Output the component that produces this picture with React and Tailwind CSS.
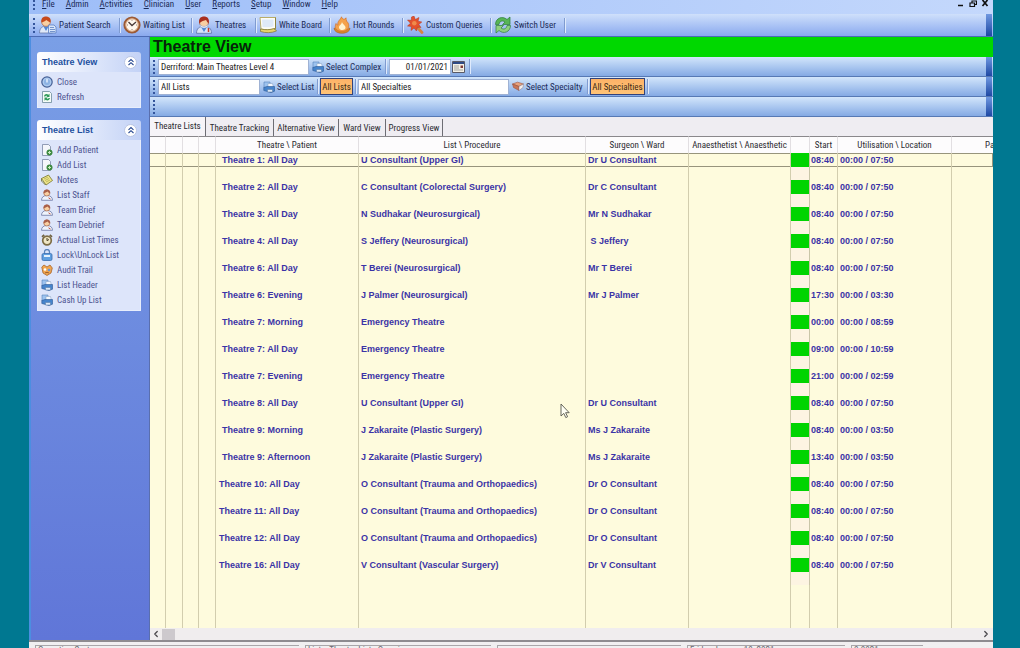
import { useState } from "react";
import { clsx } from "clsx";
import { FiChevronLeft, FiChevronRight } from "react-icons/fi";

const menus = [
  "File",
  "Admin",
  "Activities",
  "Clinician",
  "User",
  "Reports",
  "Setup",
  "Window",
  "Help",
];

const columns = [
  { label: "", width: "w-[16px]" },
  { label: "", width: "w-[17px]" },
  { label: "", width: "w-[16px]" },
  { label: "", width: "w-[17px]" },
  { label: "Theatre \\ Patient", width: "w-[143px]" },
  { label: "List \\ Procedure", width: "w-[227px]" },
  { label: "Surgeon \\ Ward", width: "w-[103px]" },
  { label: "Anaesthetist \\ Anaesthetic", width: "w-[102px]" },
  { label: "", width: "w-[19px]" },
  { label: "Start", width: "w-[28px]" },
  { label: "Utilisation \\ Location", width: "w-[114px]" },
];

const lists = [
  ["Theatre 1: All Day", "U Consultant (Upper GI)", "Dr U Consultant", "08:40", "07:50"],
  ["Theatre 2: All Day", "C Consultant (Colorectal Surgery)", "Dr C Consultant", "08:40", "07:50"],
  ["Theatre 3: All Day", "N Sudhakar (Neurosurgical)", "Mr N Sudhakar", "08:40", "07:50"],
  ["Theatre 4: All Day", "S Jeffery (Neurosurgical)", "\u00a0S Jeffery", "08:40", "07:50"],
  ["Theatre 6: All Day", "T Berei (Neurosurgical)", "Mr T Berei", "08:40", "07:50"],
  ["Theatre 6: Evening", "J Palmer (Neurosurgical)", "Mr J Palmer", "17:30", "03:30"],
  ["Theatre 7: Morning", "Emergency Theatre", "", "00:00", "08:59"],
  ["Theatre 7: All Day", "Emergency Theatre", "", "09:00", "10:59"],
  ["Theatre 7: Evening", "Emergency Theatre", "", "21:00", "02:59"],
  ["Theatre 8: All Day", "U Consultant (Upper GI)", "Dr U Consultant", "08:40", "07:50"],
  ["Theatre 9: Morning", "J Zakaraite (Plastic Surgery)", "Ms J Zakaraite", "08:40", "03:50"],
  ["Theatre 9: Afternoon", "J Zakaraite (Plastic Surgery)", "Ms J Zakaraite", "13:40", "03:50"],
  ["Theatre 10: All Day", "O Consultant (Trauma and Orthopaedics)", "Dr O Consultant", "08:40", "07:50"],
  ["Theatre 11: All Day", "O Consultant (Trauma and Orthopaedics)", "Dr O Consultant", "08:40", "07:50"],
  ["Theatre 12: All Day", "O Consultant (Trauma and Orthopaedics)", "Dr O Consultant", "08:40", "07:50"],
  ["Theatre 16: All Day", "V Consultant (Vascular Surgery)", "Dr V Consultant", "08:40", "07:50"],
];

/* ---------- icons ---------- */

const PatientIcon = () => (
  <svg viewBox="0 0 18 18" className="size-[18px] shrink-0">
    <path d="M.5 17c0-5 3-7 6.500-7s6.500 2 6.500 7z" fill="#dfe8f8" stroke="#6a7cab" strokeWidth=".8" />
    <path d="M4.500 10.500l2.500 4.500 2.500-4.500z" fill="#4f86d6" />
    <circle cx="7" cy="6" r="4.300" fill="#f9cfa2" stroke="#a8552a" strokeWidth=".6" />
    <path d="M2.500 6.500C1.500 2 4.500 .4 7.500 .5 11 .8 12.300 3.500 11.500 6.500 9 5.500 8 4.500 7.500 4 6 5.200 4.500 5.700 2.500 6.500z" fill="#c6491c" />
    <path d="M9.500 9h5.500l2 2v6H9.500z" fill="#d9e6fa" stroke="#5b7fc0" strokeWidth=".8" />
    <path d="M11 11.500h4M11 13.500h5M11 15.500h5" stroke="#5b7fc0" strokeWidth=".8" />
  </svg>
);

const ClockIcon = () => (
  <svg viewBox="0 0 18 18" className="size-[18px] shrink-0">
    <circle cx="9" cy="9" r="7.500" fill="#fff8ee" stroke="#9c5a35" strokeWidth="2.200" />
    <circle cx="9" cy="9" r="6.200" fill="none" stroke="#d9a57c" strokeWidth="1" />
    <path d="M5.500 6L9 9.500 13 6" fill="none" stroke="#4a3a38" strokeWidth="1.300" />
    <path d="M9 3.800v1M9 13v1M4 9h1M13 9h1" stroke="#806050" strokeWidth=".8" />
  </svg>
);

const SurgeonIcon = () => (
  <svg viewBox="0 0 18 18" className="size-[18px] shrink-0">
    <path d="M1.500 17.300c0-5 3-7 7.500-7s7.500 2 7.500 7z" fill="#d7e3f8" stroke="#5c71a8" strokeWidth=".8" />
    <path d="M6 11l3 5 3-5z" fill="#4f86d6" />
    <circle cx="9" cy="6.500" r="4.500" fill="#f9cfa2" stroke="#8b3a24" strokeWidth=".6" />
    <path d="M4.300 7.500C3.200 2.500 6 .6 9 .6s5.800 1.900 4.700 6.900C12 6 11.500 4.500 11 4 9 5 6.500 4.800 4.300 7.500z" fill="#a92f1e" />
    <path d="M5 8.500c2 2.500 6 2.500 8 0l-.6 2.300c-2 1.600-4.800 1.600-6.800 0z" fill="#eef4fd" stroke="#8fa5cc" strokeWidth=".4" />
    <path d="M13.500 12v4" stroke="#c83a2a" strokeWidth="1.500" />
  </svg>
);

const BoardIcon = () => (
  <svg viewBox="0 0 18 18" className="size-[18px] shrink-0">
    <path d="M1 1.500h15.500v11C11 14 6 14 2 13z" fill="#fdfdf6" stroke="#b9ad6a" strokeWidth="1" />
    <path d="M1.500 13c5 1 9 1 14-.5l2 2.500c-5 2-11 2.200-16 .5z" fill="#e8d66a" stroke="#7c7434" strokeWidth=".7" />
    <path d="M3 3.500h11.500v7c-4 1-8 1-11 .5z" fill="#dfeaf8" />
    <path d="M16.500 1.500v11l-1.500 1" fill="none" stroke="#8d8440" strokeWidth="1" />
  </svg>
);

const FlameIcon = () => (
  <svg viewBox="0 0 18 18" className="size-[18px] shrink-0">
    <path d="M1 12c0 7 16 7 16 0-3 2-13 2-16 0z" fill="#d98a2b" stroke="#a9621c" strokeWidth=".6" />
    <path d="M8.500 .8c1 3 3.500 3 4.500 1 0 3 1 4 2 5 2 4 0 8.500-6 8.500S1 12 3 7.500c.5 1 1 1.500 2 1.500C4 5 7.500 4 8.500 .8z" fill="#f4a24b" stroke="#d3702a" strokeWidth=".7" />
    <path d="M9 5.500c0 3 4 3.500 3.500 6.500-.5 2.700-6 2.700-6.500-.3C5.500 9.500 9 8.500 9 5.500z" fill="#fff3d0" />
  </svg>
);

const QueryIcon = () => (
  <svg viewBox="0 0 18 18" className="size-[18px] shrink-0">
    <path d="M11 11l5 5.500" stroke="#d8843f" strokeWidth="2.800" strokeLinecap="round" />
    <path d="M8 0l1.300 3.500L13 1.500 12 5.200l3.800.8-3 2.500 2.200 3-3.700-.3L10.500 15 8 12l-3 2.500.3-4L1.500 10l3-2.700L1.500 4l3.800.3L5.500 1z" fill="#e4512c" stroke="#b53218" strokeWidth=".5" />
    <circle cx="8.300" cy="7.300" r="2.300" fill="#f08a4a" />
  </svg>
);

const SwitchIcon = () => (
  <svg viewBox="0 0 18 18" className="size-[18px] shrink-0">
    <path d="M1.500 8.500C1.500 2 8.500-.5 13 3.500l3-2.500v7.500H8.500L11 6C8.500 4 5.500 5 5 8.500z" fill="#58b556" stroke="#2c7d3a" strokeWidth=".7" />
    <path d="M16.500 9.500c0 6.500-7 9-11.500 5l-3 2.500V9.500h7.500L7 12c2.500 2 5.500 1 6-2.500z" fill="#8fd07e" stroke="#2c7d3a" strokeWidth=".7" />
  </svg>
);

const PrinterIcon = () => (
  <svg viewBox="0 0 12 12" className="size-3 shrink-0">
    <path d="M1 1h6v6H1z" fill="#9dc3ef" stroke="#5580bb" strokeWidth=".6" />
    <path d="M5 2.500h4.500l1 4H5z" fill="#f4f8fd" stroke="#7f98bd" strokeWidth=".5" />
    <path d="M.8 6.500L4 5.500h7.500v4.700L8 11.500.8 9.500z" fill="#4584cc" stroke="#2b5793" strokeWidth=".6" />
    <path d="M4.500 8.500h5V11h-5z" fill="#dbe9f8" stroke="#54779f" strokeWidth=".5" />
  </svg>
);

const BookIcon = () => (
  <svg viewBox="0 0 12 12" className="size-3 shrink-0">
    <path d="M.5 3l5-1.800L11.500 3 7 5.500z" fill="#e8a27c" stroke="#a0543c" strokeWidth=".6" />
    <path d="M.5 3l1 3.500L7 9.500v-4z" fill="#c97656" stroke="#8c4a38" strokeWidth=".5" />
    <path d="M7 5.500v4L11 6.500 11.500 3z" fill="#f5f0ee" stroke="#8b7b88" strokeWidth=".5" />
  </svg>
);

const CalendarIcon = () => (
  <svg viewBox="0 0 13 12" className="h-3 w-[13px] shrink-0">
    <path d="M.5 .5h12v11H.5z" fill="#f4f1e6" stroke="#5a5a66" />
    <path d="M1 1h11v2H1z" fill="#2f4b86" />
    <path d="M2 5h5M2 7h5M2 9h9" stroke="#a5a5a0" />
    <path d="M8.500 4.500h2.500v2.500H8.500z" fill="#7d3b3b" />
  </svg>
);

const PowerIcon = () => (
  <svg viewBox="0 0 12 12" className="size-3 shrink-0">
    <circle cx="6" cy="6" r="5.200" fill="#8db3e4" stroke="#4a6295" strokeWidth="1.200" />
    <circle cx="6" cy="6" r="3.800" fill="none" stroke="#bfd6f3" strokeWidth=".8" />
    <path d="M6 3v3.500" stroke="#f3f8ff" strokeWidth="1.300" />
  </svg>
);

const RefreshIcon = () => (
  <svg viewBox="0 0 12 12" className="size-3 shrink-0">
    <path d="M1.500 .5h7l2 2v9h-9z" fill="#f5fbf8" stroke="#6c8c9c" strokeWidth=".8" />
    <path d="M3 5.500c.3-2.500 3-3 4.300-1.700l1.200-1v3.200H5.300l1-1C5.500 4.500 4.500 4.700 4.300 5.500z" fill="#2f9a5a" />
    <path d="M9 7c-.3 2.500-3 3-4.300 1.700l-1.200 1V6.500h3.200l-1 1C6.500 8 7.500 7.800 7.700 7z" fill="#2f9a5a" />
  </svg>
);

const AddPageIcon = () => (
  <svg viewBox="0 0 12 12" className="size-3 shrink-0">
    <path d="M1.500 .5h6l2 2v9h-8z" fill="#f4f6fb" stroke="#7a86a4" strokeWidth=".8" />
    <circle cx="8.500" cy="8.500" r="3" fill="#3f8a42" />
    <path d="M8.500 7v3M7 8.500h3" stroke="#c9ecc0" strokeWidth="1" />
  </svg>
);

const NoteIcon = () => (
  <svg viewBox="0 0 12 12" className="size-3 shrink-0">
    <path d="M.5 4.500l7-3.500 4 5.500-6.500 4.500z" fill="#ede58a" stroke="#77762f" strokeWidth=".8" />
    <path d="M3 5l4-2M4 6.500l4-2M5 8l4-2" stroke="#a19a45" strokeWidth=".6" />
    <path d="M.5 4.500v2.500l4 4" fill="none" stroke="#6d6c2c" strokeWidth=".8" />
  </svg>
);

const StaffIcon = () => (
  <svg viewBox="0 0 12 12" className="size-3 shrink-0">
    <path d="M.5 11.300c0-3 2-4.800 5.500-4.800s5.500 1.800 5.500 4.800z" fill="#eef3fc" stroke="#6f78a6" strokeWidth=".8" />
    <circle cx="5.800" cy="4" r="3" fill="#f9cfa2" stroke="#9a5638" strokeWidth=".6" />
    <path d="M2.600 4.500C2.200 1.500 4 .4 6 .4s3.600 1.100 3.200 4.100C7.500 3.800 7 3 6.500 2.500 5.500 3.500 4 3.600 2.600 4.500z" fill="#a9604a" />
    <path d="M7.500 8.800l2 1.200" stroke="#c34f3b" strokeWidth="1" />
  </svg>
);

const AlarmIcon = () => (
  <svg viewBox="0 0 12 12" className="size-3 shrink-0">
    <path d="M1 2.800L3.200 .8M11 2.800L8.800 .8" stroke="#6f6243" strokeWidth="1.800" />
    <circle cx="6" cy="6.500" r="4.300" fill="#efe6c4" stroke="#7d6d45" strokeWidth="1.700" />
    <path d="M6 4v2.700l2-1.200" fill="none" stroke="#4b4028" strokeWidth="1" />
  </svg>
);

const LockIcon = () => (
  <svg viewBox="0 0 12 12" className="size-3 shrink-0">
    <path d="M3.500 5V3a2.500 2.500 0 0 1 5 0v2" fill="none" stroke="#5a84bb" strokeWidth="1.300" />
    <rect x="1" y="4.500" width="10" height="7" rx="1.500" fill="#5f9fe0" stroke="#3b6dae" strokeWidth=".8" />
    <path d="M3 6h6v2H3z" fill="#e4f1fd" />
  </svg>
);

const AuditIcon = () => (
  <svg viewBox="0 0 12 12" className="size-3 shrink-0">
    <path d="M.8 3l2.200-2 3 2 3-2 2.300 3-1.300 5L6 11.500 2 9z" fill="#f0a650" stroke="#a8642c" strokeWidth=".8" />
    <circle cx="4" cy="5.500" r="1.300" fill="#fff" />
    <circle cx="8" cy="6" r="1.300" fill="#6c94cf" />
    <path d="M4 9c1.500-.8 2.500-.8 4 0" fill="none" stroke="#8b4b20" strokeWidth=".8" />
  </svg>
);

const CursorIcon = () => (
  <svg viewBox="0 0 10 16" className="h-4 w-2.5">
    <path d="M1 1v12l2.800-2.600 2 4.200 1.800-.9-2-4h3.600z" fill="#fffff4" stroke="#55554c" strokeWidth=".9" />
  </svg>
);

/* ---------- pieces ---------- */

const Grip = () => (
  <span className="ml-[3px] mr-[3px] h-[14px] shrink-0 border-l-2 border-dotted border-[#34559c]"></span>
);

const Separator = () => (
  <span className="h-[15px] w-0.5 shrink-0 border-l border-r border-l-[#7f9bd0] border-r-[#dfeafc]"></span>
);

const EndCap = () => (
  <span className="ml-auto mr-px w-1.5 shrink-0 self-stretch bg-linear-to-b from-[#6f97e0] to-[#1f48a4]"></span>
);

const BarRow = ({ children }) => (
  <div className="flex h-5 items-center border-b border-[#5779b4] bg-linear-to-b from-[#d3e6fb] to-[#85aae4]">
    <Grip />
    {children}
    <EndCap />
  </div>
);

const BarButton = ({ icon, label, width }) => (
  <button
    type="button"
    className={clsx("flex shrink-0 items-center gap-0.5 whitespace-nowrap text-[#1c2c58]", width)}
  >
    {icon}
    {label}
  </button>
);

const FilterButton = ({ label, width }) => (
  <button
    type="button"
    className={clsx(
      "h-[17px] shrink-0 whitespace-nowrap border border-[#32437c] bg-linear-to-b from-[#fdb267] to-[#ffc477] text-[#3c2a14]",
      width
    )}
  >
    {label}
  </button>
);

const fieldClass =
  "h-4 min-w-0 shrink-0 rounded-none border border-[#9fb2d4] bg-white px-0.5 text-[#1b1b22] outline-none";

const SidePanel = ({ title, items }) => (
  <section className="overflow-hidden rounded-t-[3px]">
    <h2 className="flex h-5 items-center justify-between bg-linear-to-r from-white to-[#c3d2f6] pl-[5px] pr-1 text-[9px] font-bold text-[#23509f] [font-family:'Liberation_Sans',sans-serif]">
      {title}
      <button
        type="button"
        aria-label={`Collapse ${title}`}
        className="flex size-[13px] items-center justify-center rounded-full border border-[#b9c5e4] bg-white"
      >
        <svg viewBox="0 0 8 8" className="size-2">
          <path d="M1.500 3.800L4 1.500l2.500 2.300M1.500 7L4 4.700 6.500 7" fill="none" stroke="#26478f" strokeWidth="1.100" />
        </svg>
      </button>
    </h2>
    <ul className="border border-t-0 border-[#e8eefc] bg-[#dde5fa] pb-[3px] pt-[2px]">
      {items.map(({ label, icon }) => (
        <li key={label}>
          <a href="#" className="flex h-[15px] items-center gap-1 pl-[3px] text-[#4d5491]">
            {icon}
            {label}
          </a>
        </li>
      ))}
    </ul>
  </section>
);

const MainToolbar = () => (
  <nav className="flex h-[23px] shrink-0 items-center border-b border-[#4c6bb4] bg-linear-to-b from-[#cfe0fb] to-[#8aa9ee]">
    <span className="ml-1 mr-1 h-[15px] shrink-0 border-l-2 border-dotted border-[#34559c]"></span>
    <BarButton icon={<PatientIcon />} label="Patient Search" width="w-[80px]" />
    <Separator />
    <BarButton icon={<ClockIcon />} label="Waiting List" width="ml-0.5 w-[68px]" />
    <Separator />
    <BarButton icon={<SurgeonIcon />} label="Theatres" width="ml-0.5 w-[60px]" />
    <Separator />
    <BarButton icon={<BoardIcon />} label="White Board" width="ml-0.5 w-[70px]" />
    <Separator />
    <BarButton icon={<FlameIcon />} label="Hot Rounds" width="ml-0.5 w-[69px]" />
    <Separator />
    <BarButton icon={<QueryIcon />} label="Custom Queries" width="ml-0.5 w-[84px]" />
    <Separator />
    <BarButton icon={<SwitchIcon />} label="Switch User" width="ml-0.5 w-[70px]" />
    <Separator />
    <EndCap />
  </nav>
);

const Sidebar = () => (
  <aside className="flex w-[121px] shrink-0 flex-col gap-3 border-l-2 border-r border-l-[#4c8ee0] border-r-[#5a6fae] bg-linear-to-b from-[#7a9fe6] to-[#6076d8] pl-1.5 pr-2 pt-[15px]">
    <SidePanel
      title="Theatre View"
      items={[
        { label: "Close", icon: <PowerIcon /> },
        { label: "Refresh", icon: <RefreshIcon /> },
      ]}
    />
    <SidePanel
      title="Theatre List"
      items={[
        { label: "Add Patient", icon: <AddPageIcon /> },
        { label: "Add List", icon: <AddPageIcon /> },
        { label: "Notes", icon: <NoteIcon /> },
        { label: "List Staff", icon: <StaffIcon /> },
        { label: "Team Brief", icon: <StaffIcon /> },
        { label: "Team Debrief", icon: <StaffIcon /> },
        { label: "Actual List Times", icon: <AlarmIcon /> },
        { label: "Lock\\UnLock List", icon: <LockIcon /> },
        { label: "Audit Trail", icon: <AuditIcon /> },
        { label: "List Header", icon: <PrinterIcon /> },
        { label: "Cash Up List", icon: <PrinterIcon /> },
      ]}
    />
  </aside>
);

const Tabs = () => {
  const [active, setActive] = useState("Theatre Lists");
  const tabs = [
    { label: "Theatre Lists", width: "w-[56px]" },
    { label: "Theatre Tracking", width: "w-[68px]" },
    { label: "Alternative View", width: "w-[65px]" },
    { label: "Ward View", width: "w-[47px]" },
    { label: "Progress View", width: "w-[57px]" },
  ];

  return (
    <div role="tablist" className="flex h-[19px] items-end bg-[#efedf2]">
      {tabs.map(({ label, width }) => (
        <button
          key={label}
          type="button"
          role="tab"
          aria-selected={active === label}
          onClick={() => setActive(label)}
          className={clsx(
            "whitespace-nowrap border-r border-[#6d6d74] text-[#2b2b31]",
            width,
            active === label ? "h-[19px] bg-[#f6f4f8] pb-0.5" : "h-[17px]"
          )}
        >
          {label}
        </button>
      ))}
    </div>
  );
};

const Cell = ({ selected, className, children }) => (
  <td className="overflow-hidden border-r border-[#d2cdae] p-0 align-top whitespace-nowrap">
    <div
      className={clsx(
        "h-[14px]",
        selected ? "border-y border-[#97947c] leading-[12px]" : "leading-[14px]",
        className
      )}
    >
      {children}
    </div>
  </td>
);

const TheatreTable = () => (
  <table className="h-full w-full table-fixed border-separate border-spacing-0">
    <thead>
      <tr className="h-[17px] bg-[#fdfcfd]">
        {columns.map(({ label, width }, i) => (
          <th
            key={i}
            scope="col"
            className={clsx(
              "overflow-hidden border-r border-t border-r-[#e2dfe2] border-t-[#8a888c] p-0 text-center font-normal whitespace-nowrap text-[#2b2b31]",
              width
            )}
          >
            {label}
          </th>
        ))}
        <th
          scope="col"
          className="overflow-hidden border-t border-[#8a888c] p-0 pl-[33px] text-left font-normal whitespace-nowrap text-[#2b2b31]"
        >
          Pa
        </th>
      </tr>
    </thead>
    <tbody className="text-[9px] font-bold text-[#3b33a6] [font-family:'Liberation_Sans',sans-serif]">
      {lists.map(([theatre, list, surgeon, start, planned], i) => {
        const selected = i === 0;
        return (
          <tr key={theatre} className="h-[27px]">
            <Cell selected={selected} />
            <Cell selected={selected} />
            <Cell selected={selected} />
            <Cell selected={selected} />
            <Cell selected={selected} className={/\d\d:/.test(theatre) ? "pl-[3px]" : "pl-1.5"}>
              {theatre}
            </Cell>
            <Cell selected={selected} className="pl-0.5">
              {list}
            </Cell>
            <Cell selected={selected} className="pl-0.5">
              {surgeon}
            </Cell>
            <Cell selected={selected} />
            <td className="border-r border-[#c9c5a8] bg-[#fdf4e2] p-0 align-top">
              <div className="h-[14px] bg-[#00d400]"></div>
            </td>
            <Cell selected={selected} className="pl-px">
              {start}
            </Cell>
            <Cell selected={selected} className="pl-0.5">
              00:00 / {planned}
            </Cell>
            <td className="p-0 align-top">
              <div className={clsx("h-[14px]", selected && "border-y border-r border-[#97947c]")}></div>
            </td>
          </tr>
        );
      })}
      <tr aria-hidden="true">
        {columns.map((_, i) => (
          <td key={i} className="border-r border-[#d2cdae] p-0"></td>
        ))}
        <td className="p-0"></td>
      </tr>
    </tbody>
  </table>
);

const StatusBar = () => (
  <footer className="flex h-[6px] shrink-0 items-start gap-[6px] overflow-hidden bg-[#f1eff1] pl-1.5 pt-[3px] leading-[9px] text-[#6b6870]">
    <span className="w-[264px] border-l border-t border-[#a9a6aa] pl-0.5">Operating System</span>
    <span className="w-[186px] border-l border-t border-[#a9a6aa] pl-0.5">Lists: Theatre Lists Overview</span>
    <span className="w-[184px] border-l border-t border-[#a9a6aa] pl-0.5">&nbsp;</span>
    <span className="w-[158px] border-l border-t border-[#a9a6aa] pl-0.5">Friday January 10, 2021</span>
    <span className="w-[72px] border-l border-t border-[#a9a6aa] pl-0.5">0.0021 s</span>
  </footer>
);

const App = () => {
  return (
    <div className="relative flex h-screen flex-col overflow-hidden bg-[#007891] pl-[29px] pr-[27px] text-[9px] leading-3 [font-family:'Roboto_Condensed','Liberation_Sans',sans-serif]">
      <header className="flex h-[14px] shrink-0 items-start bg-linear-to-r from-[#9dbdf8] to-[#c4d8fc]">
        <span className="ml-1 mr-[7px] h-[10px] border-l-2 border-dotted border-[#34559c]"></span>
        <nav className="flex gap-[11px] leading-[9px] text-[#1c2c58]">
          {menus.map((menu) => (
            <button key={menu} type="button">
              <u>{menu[0]}</u>
              {menu.slice(1)}
            </button>
          ))}
        </nav>
        <div className="ml-auto mr-1 flex gap-1">
          <button type="button" aria-label="Minimise">
            <svg viewBox="0 0 8 8" className="size-2">
              <path d="M1 5.500h5" stroke="#111" strokeWidth="1.500" />
            </svg>
          </button>
          <button type="button" aria-label="Restore">
            <svg viewBox="0 0 8 8" className="size-2">
              <path d="M3 2.500V1h4.500v3.500H6M1 3h4.500v3.500H1z" fill="none" stroke="#111" strokeWidth="1.200" />
            </svg>
          </button>
          <button type="button" aria-label="Close window">
            <svg viewBox="0 0 8 8" className="size-2">
              <path d="M1.500 0l5 6M6.500 0l-5 6" stroke="#111" strokeWidth="1.700" />
            </svg>
          </button>
        </div>
      </header>

      <MainToolbar />

      <div className="flex min-h-0 flex-1 border-b-2 border-[#8e8b90]">
        <Sidebar />

        <main className="flex min-w-0 flex-1 flex-col bg-[#fefbdd]">
          <h1 className="h-5 bg-[#00d800] pl-[3px] text-[16px] font-bold leading-5 text-[#06230a] [font-family:'Liberation_Sans',sans-serif]">
            Theatre View
          </h1>

          <BarRow>
            <input aria-label="Complex" defaultValue="Derriford: Main Theatres Level 4" className={clsx(fieldClass, "w-[151px]")} />
            <BarButton icon={<PrinterIcon />} label="Select Complex" width="ml-[3px] w-[73px]" />
            <Separator />
            <input aria-label="Date" defaultValue="01/01/2021" className={clsx(fieldClass, "ml-0.5 w-[62px] text-right")} />
            <button type="button" aria-label="Pick date" className="ml-px mr-1">
              <CalendarIcon />
            </button>
            <Separator />
          </BarRow>

          <BarRow>
            <input aria-label="List" defaultValue="All Lists" className={clsx(fieldClass, "w-[102px]")} />
            <BarButton icon={<PrinterIcon />} label="Select List" width="ml-[3px] w-[54px]" />
            <Separator />
            <FilterButton label="All Lists" width="ml-px w-[33px]" />
            <span className="w-0.5"></span>
            <Separator />
            <input aria-label="Specialty" defaultValue="All Specialties" className={clsx(fieldClass, "ml-px w-[151px]")} />
            <BarButton icon={<BookIcon />} label="Select Specialty" width="ml-[3px] w-[75px]" />
            <Separator />
            <FilterButton label="All Specialties" width="ml-px w-[55px]" />
            <span className="w-0.5"></span>
            <Separator />
          </BarRow>

          <BarRow />

          <Tabs />

          <div className="min-h-0 flex-1 overflow-hidden">
            <TheatreTable />
          </div>

          <div className="flex h-3 shrink-0 items-center bg-[#f0edee] text-[#4a484c]">
            <button type="button" aria-label="Scroll left" className="flex w-3 justify-center">
              <FiChevronLeft size={10} strokeWidth={3} />
            </button>
            <span className="h-[11px] w-[13px] bg-[#cdc9cd]"></span>
            <button type="button" aria-label="Scroll right" className="ml-auto mr-px flex w-3 justify-center">
              <FiChevronRight size={10} strokeWidth={3} />
            </button>
          </div>
        </main>
      </div>

      <StatusBar />

      <div className="pointer-events-none absolute left-[560px] top-[403px]">
        <CursorIcon />
      </div>
    </div>
  );
};

export default App;
